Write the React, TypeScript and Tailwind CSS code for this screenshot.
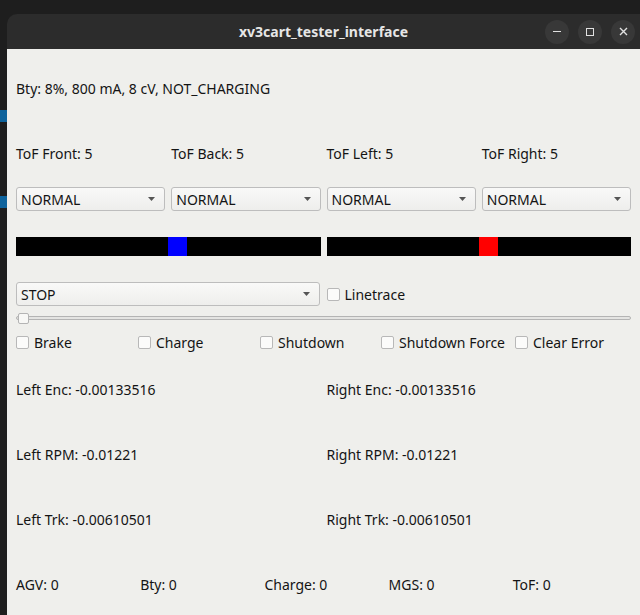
import React from 'react';

const font = "font-['Noto_Sans',sans-serif]";

const Combo: React.FC<{ label: string; className?: string }> = ({ label, className }) => (
  <div className={`h-[24px] flex items-center justify-between pl-[4px] pr-[9px] border border-[#bdbdbd] rounded-[3px] bg-gradient-to-b from-[#f9f9f8] to-[#eeeeec] ${className ?? ''}`}>
    <span className="text-[14px] text-[#141414]">{label}</span>
    <svg width="7" height="4" viewBox="0 0 7 4">
      <path d="M0 0 L7 0 L3.5 4 Z" fill="#555" />
    </svg>
  </div>
);

const Check: React.FC<{ label: string; className?: string }> = ({ label, className }) => (
  <div className={`flex items-center gap-[5px] ${className ?? ''}`}>
    <div className="w-[13px] h-[13px] border border-[#b8b8b8] rounded-[2px] bg-[#fbfbfa]"></div>
    <span className="text-[14px] text-[#141414]">{label}</span>
  </div>
);

const Bar: React.FC<{ color: string }> = ({ color }) => (
  <div className="h-[19px] bg-black flex">
    <div className="w-1/2"></div>
    <div className={`w-[19px] ${color}`}></div>
  </div>
);

const App: React.FC = () => {
  const tof = ['ToF Front: 5', 'ToF Back: 5', 'ToF Left: 5', 'ToF Right: 5'];
  const status = ['AGV: 0', 'Bty: 0', 'Charge: 0', 'MGS: 0', 'ToF: 0'];

  return (
    <div className={`w-[640px] h-[615px] bg-[#1e1e1e] flex overflow-hidden ${font}`}>
      {/* sidebar strip of the editor behind */}
      <div className="w-[7px] shrink-0 flex flex-col">
        <div className="mt-[110px] h-[12px] bg-[#0e639c]"></div>
        <div className="mt-[74px] h-[12px] bg-[#0e639c]"></div>
      </div>

      <div className="flex-1 flex flex-col pt-[14px]">
        {/* title bar */}
        <div className="h-[35px] shrink-0 bg-[#2c2c2c] rounded-tl-[10px] grid grid-cols-[1fr_auto_1fr] items-center">
          <div></div>
          <span className="text-[14px] font-bold text-[#e6e6e6]">xv3cart_tester_interface</span>
          <div className="flex justify-end gap-[9px] pr-[5px]">
            <div className="w-[24px] h-[24px] rounded-full bg-[#383838] flex items-center justify-center">
              <div className="w-[8px] h-[1.5px] bg-[#e0e0e0]"></div>
            </div>
            <div className="w-[24px] h-[24px] rounded-full bg-[#383838] flex items-center justify-center">
              <div className="w-[8px] h-[8px] border border-[#e0e0e0]"></div>
            </div>
            <div className="w-[24px] h-[24px] rounded-full bg-[#383838] flex items-center justify-center">
              <svg width="9" height="9" viewBox="0 0 9 9">
                <path d="M1 1 L8 8 M8 1 L1 8" stroke="#e0e0e0" strokeWidth="1.4" />
              </svg>
            </div>
          </div>
        </div>

        {/* content */}
        <div className="flex-1 bg-[#efefec] px-[9px] flex flex-col text-[14px] text-[#141414]">
          <div className="mt-[27px] h-[24px] flex items-center">Bty: 8%, 800 mA, 8 cV, NOT_CHARGING</div>

          <div className="mt-[41px] h-[24px] grid grid-cols-4 gap-x-[6px] items-center">
            {tof.map(t => <span key={t}>{t}</span>)}
          </div>

          <div className="mt-[22px] grid grid-cols-4 gap-x-[6px]">
            {tof.map(t => <Combo key={t} label="NORMAL" />)}
          </div>

          <div className="mt-[26px] grid grid-cols-2 gap-x-[6px]">
            <Bar color="bg-[#0000ff]" />
            <Bar color="bg-[#ff0000]" />
          </div>

          <div className="mt-[26px] grid grid-cols-2 gap-x-[6px] items-center">
            <Combo label="STOP" className="mr-[1px]" />
            <Check label="Linetrace" />
          </div>

          <div className="mt-[6px] h-[12px] flex items-center">
            <div className="flex-1 h-[4px] border border-[#b4b4b4] rounded-[2px] bg-[#e4e4e2] flex items-center">
              <div className="ml-[1px] w-[11px] h-[11px] border border-[#b4b4b4] rounded-[2px] bg-[#f8f8f6]"></div>
            </div>
          </div>

          <div className="mt-[8px] h-[20px] flex items-center">
            <Check label="Brake" className="w-[122px]" />
            <Check label="Charge" className="w-[122px]" />
            <Check label="Shutdown" className="w-[121px]" />
            <Check label="Shutdown Force" className="w-[134px]" />
            <Check label="Clear Error" />
          </div>

          <div className="mt-[25px] h-[24px] grid grid-cols-2 gap-x-[6px] items-center">
            <span>Left Enc: -0.00133516</span>
            <span>Right Enc: -0.00133516</span>
          </div>
          <div className="mt-[41px] h-[24px] grid grid-cols-2 gap-x-[6px] items-center">
            <span>Left RPM: -0.01221</span>
            <span>Right RPM: -0.01221</span>
          </div>
          <div className="mt-[41px] h-[24px] grid grid-cols-2 gap-x-[6px] items-center">
            <span>Left Trk: -0.00610501</span>
            <span>Right Trk: -0.00610501</span>
          </div>

          <div className="mt-[41px] h-[24px] grid grid-cols-5 gap-x-[6px] items-center">
            {status.map(s => <span key={s}>{s}</span>)}
          </div>
        </div>
      </div>
    </div>
  );
};

export default App;
